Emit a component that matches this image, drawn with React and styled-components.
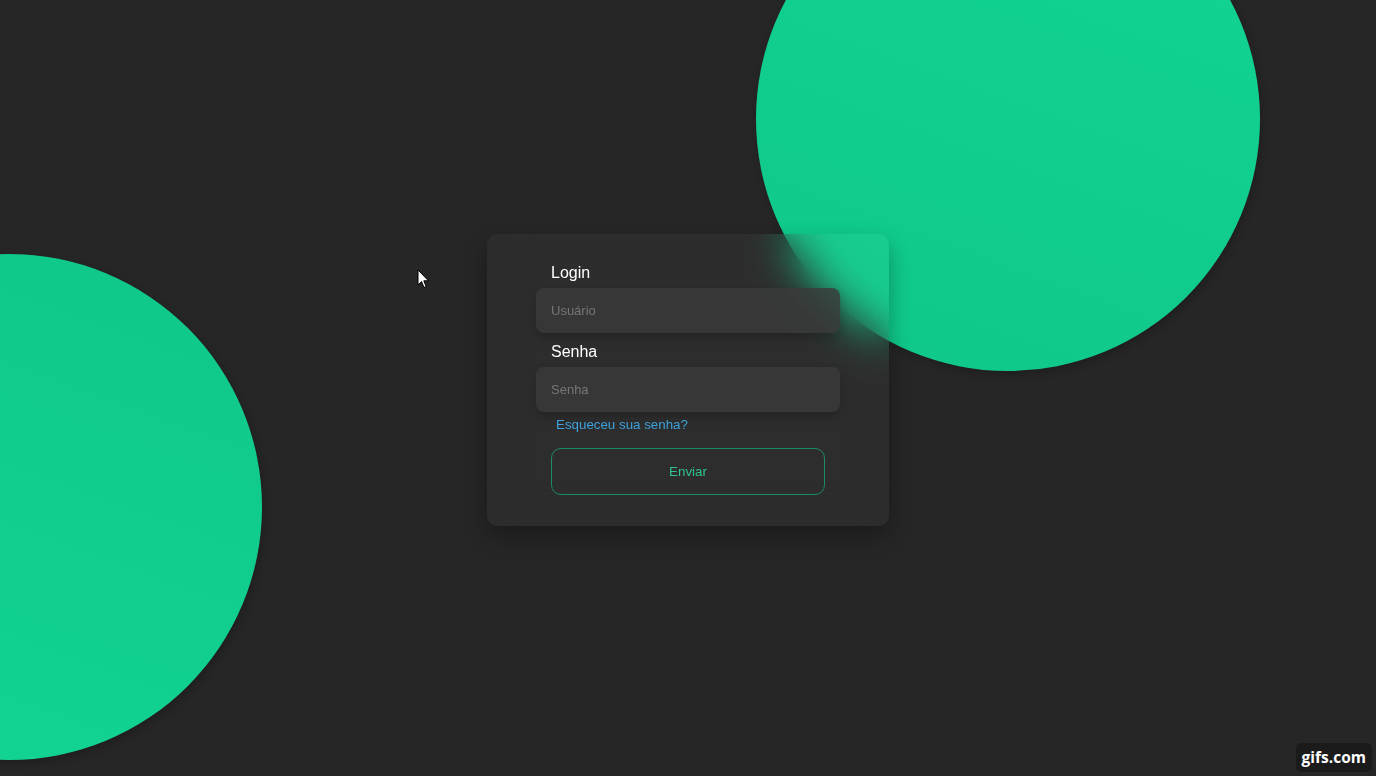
import React from 'react'
import styled, { createGlobalStyle } from 'styled-components'

const GlobalStyle = createGlobalStyle`
  html, body {
    margin: 0;
    padding: 0;
    background: #262626;
    font-family: "Liberation Sans", Arial, sans-serif;
  }
`

const Page = styled.div`
  position: relative;
  height: 100vh;
  overflow: hidden;
  background: #262626;
  display: flex;
  align-items: center;
  justify-content: center;
  padding-bottom: 16px;
  box-sizing: border-box;
`

const Circle = styled.div`
  position: absolute;
  left: ${p => p.$x}px;
  top: ${p => p.$y}px;
  width: ${p => p.$size}px;
  height: ${p => p.$size}px;
  border-radius: 50%;
  background: linear-gradient(${p => p.$angle}deg, #12d593 0%, #0fc788 100%);
  box-shadow: 2px 3px 8px rgba(0, 0, 0, 0.22);
`

const Card = styled.form`
  position: relative;
  z-index: 1;
  width: 402px;
  box-sizing: border-box;
  padding: 30px 49px 31px;
  border-radius: 10px;
  background: rgba(255, 255, 255, 0.035);
  backdrop-filter: blur(22px);
  box-shadow: 0 10px 22px rgba(0, 0, 0, 0.3);
  display: flex;
  flex-direction: column;
`

const Label = styled.label`
  display: block;
  padding-left: 15px;
  margin-top: ${p => (p.$first ? 0 : 10)}px;
  margin-bottom: 6px;
  font-size: 16px;
  line-height: 18px;
  color: #ffffff;
`

const Input = styled.input`
  height: 45px;
  box-sizing: border-box;
  border: none;
  outline: none;
  border-radius: 8px;
  padding: 0 15px;
  background: rgba(58, 58, 58, 0.82);
  box-shadow: 0 5px 10px rgba(0, 0, 0, 0.22);
  font-family: "Liberation Sans", Arial, sans-serif;
  font-size: 13px;
  color: #dddddd;

  &::placeholder {
    color: #767676;
  }
`

const Forgot = styled.a`
  display: block;
  margin-top: 5px;
  padding-left: 20px;
  font-size: 13.33px;
  line-height: 16px;
  color: #3ea2dc;
  text-decoration: none;
`

const Button = styled.button`
  margin: 15px 15px 0;
  height: 47px;
  border-radius: 10px;
  border: 1px solid #1d8c63;
  background: transparent;
  font-family: "Liberation Sans", Arial, sans-serif;
  font-size: 13.33px;
  color: #2ec48b;
  cursor: pointer;
`

const Pointer = styled.svg`
  position: absolute;
  left: 417px;
  top: 269px;
  z-index: 2;
`

const Watermark = styled.div`
  position: absolute;
  right: 4px;
  bottom: 4px;
  padding: 4px 6px 5px;
  border-radius: 5px;
  background: #1b1b1b;
  color: #ffffff;
  font-family: "Open Sans", "Liberation Sans", sans-serif;
  font-weight: 700;
  font-size: 15.5px;
  line-height: 20px;
`

export default function App() {
  return (
    <>
      <GlobalStyle />
      <Page>
        <Circle $x={756} $y={-133} $size={504} $angle={200} />
        <Circle $x={-244} $y={254} $size={506} $angle={20} />
        <Card onSubmit={e => e.preventDefault()}>
          <Label $first>Login</Label>
          <Input type="text" placeholder="Usuário" />
          <Label>Senha</Label>
          <Input type="password" placeholder="Senha" />
          <Forgot href="#">Esqueceu sua senha?</Forgot>
          <Button type="submit">Enviar</Button>
        </Card>
        <Pointer width="13" height="20" viewBox="0 0 13 20">
          <path d="M1 1 L1 16 L4.5 12.5 L7 18.5 L9.2 17.6 L6.8 11.8 L11.5 11.8 Z" fill="#ffffff" stroke="#000000" strokeWidth="1" strokeLinejoin="round" />
        </Pointer>
        <Watermark>gifs.com</Watermark>
      </Page>
    </>
  )
}
